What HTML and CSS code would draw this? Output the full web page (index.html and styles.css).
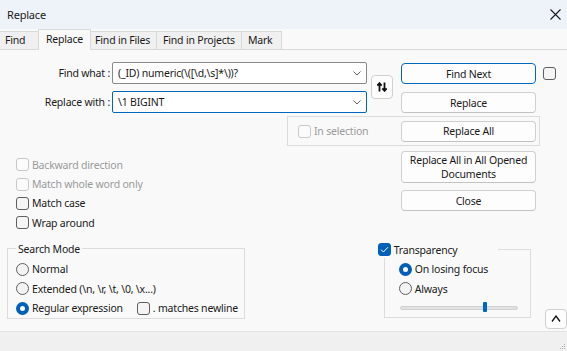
FILE: index.html
```html
<!DOCTYPE html>
<html>
<head>
    <title>Replace</title>
    <link rel="stylesheet" href="styles.css">
</head>
<body>
    <div class="window">
        <div class="titlebar">
            <span>Replace</span>
            <svg class="close-icon" width="11" height="11" viewBox="0 0 11 11">
                <path d="M0.5 0.5 L10.5 10.5 M10.5 0.5 L0.5 10.5" stroke="#1a1a1a" stroke-width="1.1" fill="none"/>
            </svg>
        </div>

        <div class="tabs">
            <div class="tab">Find</div>
            <div class="tab active">Replace</div>
            <div class="tab">Find in Files</div>
            <div class="tab">Find in Projects</div>
            <div class="tab">Mark</div>
        </div>

        <div class="top-row">
            <div class="fields">
                <label class="field-label">Find what :</label>
                <div class="combo">
                    <span>(_ID) numeric(\([\d,\s]*\))?</span>
                    <svg width="8" height="5" viewBox="0 0 8 5"><path d="M0.5 0.5 L4 4 L7.5 0.5" stroke="#606060" fill="none"/></svg>
                </div>
                <label class="field-label">Replace with :</label>
                <div class="combo focused">
                    <span>\1 BIGINT</span>
                    <svg width="8" height="5" viewBox="0 0 8 5"><path d="M0.5 0.5 L4 4 L7.5 0.5" stroke="#606060" fill="none"/></svg>
                </div>
            </div>
            <button class="swap">
                <svg width="10" height="10" viewBox="0 0 10 10">
                    <path d="M2.5 9.5 V1.5 M0.3 3.6 L2.5 1.2 L4.7 3.6" stroke="#111" stroke-width="1.8" fill="none"/>
                    <path d="M7.5 0.5 V8.5 M5.3 6.4 L7.5 8.8 L9.7 6.4" stroke="#111" stroke-width="1.8" fill="none"/>
                </svg>
            </button>
            <div class="btn-col first">
                <div class="btn-line">
                    <button class="btn default">Find Next</button>
                    <span class="cb side-check"></span>
                </div>
                <button class="btn">Replace</button>
            </div>
        </div>

        <div class="selection-box">
            <label class="check disabled"><span class="cb"></span>In selection</label>
            <button class="btn">Replace All</button>
        </div>

        <div class="mid-row">
            <div class="options">
                <label class="check disabled"><span class="cb"></span>Backward direction</label>
                <label class="check disabled"><span class="cb"></span>Match whole word only</label>
                <label class="check"><span class="cb"></span>Match case</label>
                <label class="check"><span class="cb"></span>Wrap around</label>
            </div>
            <div class="btn-col second">
                <button class="btn tall">Replace All in All Opened Documents</button>
                <button class="btn">Close</button>
            </div>
        </div>

        <div class="bottom-row">
            <fieldset class="group search-mode">
                <legend>Search Mode</legend>
                <label class="check"><span class="rb"></span>Normal</label>
                <label class="check"><span class="rb"></span>Extended (\n, \r, \t, \0, \x...)</label>
                <div class="regex-line">
                    <label class="check"><span class="rb on"></span>Regular expression</label>
                    <label class="check newline"><span class="cb"></span>. matches newline</label>
                </div>
            </fieldset>

            <fieldset class="group transparency">
                <legend>
                    <span class="cb on">
                        <svg width="9" height="7" viewBox="0 0 9 7"><path d="M1 3.6 L3.4 6 L8 1.2" stroke="#fff" stroke-width="1" fill="none"/></svg>
                    </span>Transparency
                </legend>
                <label class="check"><span class="rb on"></span>On losing focus</label>
                <label class="check"><span class="rb"></span>Always</label>
                <div class="slider-line">
                    <div class="track">
                        <div class="thumb" style="left: 82px"></div>
                    </div>
                </div>
            </fieldset>

            <button class="collapse">
                <svg width="10" height="7" viewBox="0 0 10 7"><path d="M1 6.5 L5 1 L9 6.5" stroke="#111" stroke-width="1.3" fill="none"/></svg>
            </button>
        </div>

        <div class="statusbar">
            <svg class="grip" width="7" height="7" viewBox="0 0 7 7">
                <rect x="5" y="1" width="1" height="1" fill="#b0b0b0"/>
                <rect x="3" y="3" width="1" height="1" fill="#b0b0b0"/>
                <rect x="5" y="3" width="1" height="1" fill="#b0b0b0"/>
                <rect x="1" y="5" width="1" height="1" fill="#b0b0b0"/>
                <rect x="3" y="5" width="1" height="1" fill="#b0b0b0"/>
                <rect x="5" y="5" width="1" height="1" fill="#b0b0b0"/>
            </svg>
        </div>
    </div>
</body>
</html>
```

FILE: styles.css
```css
* { box-sizing: border-box; }
body { margin: 0; font-family: "Noto Sans", "Open Sans", sans-serif; font-size: 10.5px; letter-spacing: -0.2px; color: #1a1a1a; }
button { font: inherit; color: inherit; letter-spacing: inherit; }

.window { width: 567px; height: 351px; background: #f9f9f9; display: flex; flex-direction: column; overflow: hidden; }

.titlebar { height: 29px; flex: none; background: #eef2f9; display: flex; align-items: center; justify-content: space-between; padding: 0 6px 0 7px; font-size: 11px; }

.tabs { height: 21px; flex: none; display: flex; align-items: flex-end; border-bottom: 1px solid #d9d9d9; }
.tab { height: 18px; min-width: 40px; padding: 0 6px; background: #f0f0f0; border: 1px solid #d9d9d9; border-bottom: none; border-left: none; line-height: 16px; white-space: nowrap; }
.tab:first-child { padding-left: 5px; }
.tab.active { position: relative; height: 21px; margin: 0 -2px -1px -2px; padding: 1px 7px 0 7px; background: #f9f9f9; border-left: 1px solid #d9d9d9; z-index: 1; }

.top-row { display: flex; margin-top: 12px; }
.fields { display: grid; grid-template-columns: 110px 255px; grid-auto-rows: 22px; column-gap: 2px; row-gap: 7px; }
.field-label { text-align: right; line-height: 22px; }
.combo { display: flex; align-items: center; justify-content: space-between; background: #fff; border: 1px solid #8a8a8a; border-radius: 2px; padding: 0 5px; }
.combo.focused { border-color: #0067c0; }

.swap { width: 22px; height: 24px; margin: 13px 0 0 4px; padding: 0; background: #fdfdfd; border: 1px solid #d0d0d0; border-radius: 4px; display: flex; align-items: center; justify-content: center; }

.btn-col { display: flex; flex-direction: column; margin-left: 8px; }
.btn-col.first { margin-top: 1px; gap: 8px; }
.btn-line { display: flex; align-items: flex-start; }
.btn { width: 135px; height: 21px; padding: 0; background: #fdfdfd; border: 1px solid #d0d0d0; border-bottom-color: #c2c2c2; border-radius: 4px; line-height: 18px; }
.btn.default { border-color: #0067c0; }
.btn.tall { height: 32px; line-height: 14px; padding: 0 4px; }
.side-check { margin: 4px 0 0 7px; }

.selection-box { width: 253px; height: 30px; margin: 3px 0 0 287px; border: 1px solid #dcdcdc; display: flex; align-items: center; justify-content: space-between; padding: 0 3px 0 10px; }

.check { display: flex; align-items: center; height: 19px; white-space: nowrap; }
.check.disabled { color: #9a9a9a; }

.cb { width: 13px; height: 13px; flex: none; margin-right: 3px; border: 1px solid #5f5f5f; border-radius: 3px; background: #f5f5f5; display: flex; align-items: center; justify-content: center; }
.disabled .cb { border-color: #c8c8c8; background: #fbfbfb; }
.cb.on { background: #005fb8; border-color: #005fb8; }

.rb { width: 13px; height: 13px; flex: none; margin-right: 3px; border: 1px solid #5f5f5f; border-radius: 50%; background: #f3f3f3; }
.rb.on { border: 4px solid #005fb8; background: #fff; }

.mid-row { display: flex; }
.options { width: 385px; margin: 9px 0 0 16px; }
.options .check { height: 19.4px; }
.btn-col.second { margin-top: 5px; margin-left: 0; gap: 7px; }

.bottom-row { display: flex; align-items: flex-start; margin-top: 8px; }
.group { margin: 0; min-width: 0; border: 1px solid #dcdcdc; }
.group legend { padding: 0 2px; line-height: 16px; }
.group .check { height: 19.5px; }
.search-mode { width: 239px; margin-left: 7px; padding: 3px 0 0 8px; }
.regex-line { display: flex; }
.newline { margin-left: 14px; }

.transparency { width: 148px; margin: 1px 0 0 139px; padding: 2px 0 0 14px; }
.transparency legend { width: 120px; margin-left: -21px; padding: 0; display: flex; align-items: center; }
.slider-line { height: 18px; display: flex; align-items: center; padding-left: 1px; }
.track { position: relative; width: 118px; height: 4px; background: #e2e2e2; border: 1px solid #d2d2d2; border-radius: 2px; }
.thumb { position: absolute; top: -5px; width: 4px; height: 10px; background: #0067c0; border-radius: 1px; }

.collapse { width: 22px; height: 20px; margin: 68px 0 0 14px; padding: 0; background: #fdfdfd; border: 1px solid #d0d0d0; border-radius: 4px; display: flex; align-items: center; justify-content: center; flex: none; }

.statusbar { margin-top: auto; height: 20px; flex: none; background: #f0f0f0; border-top: 1px solid #e3e3e3; display: flex; justify-content: flex-end; align-items: flex-end; }
.grip { margin: 0 1px 1px 0; }
```
